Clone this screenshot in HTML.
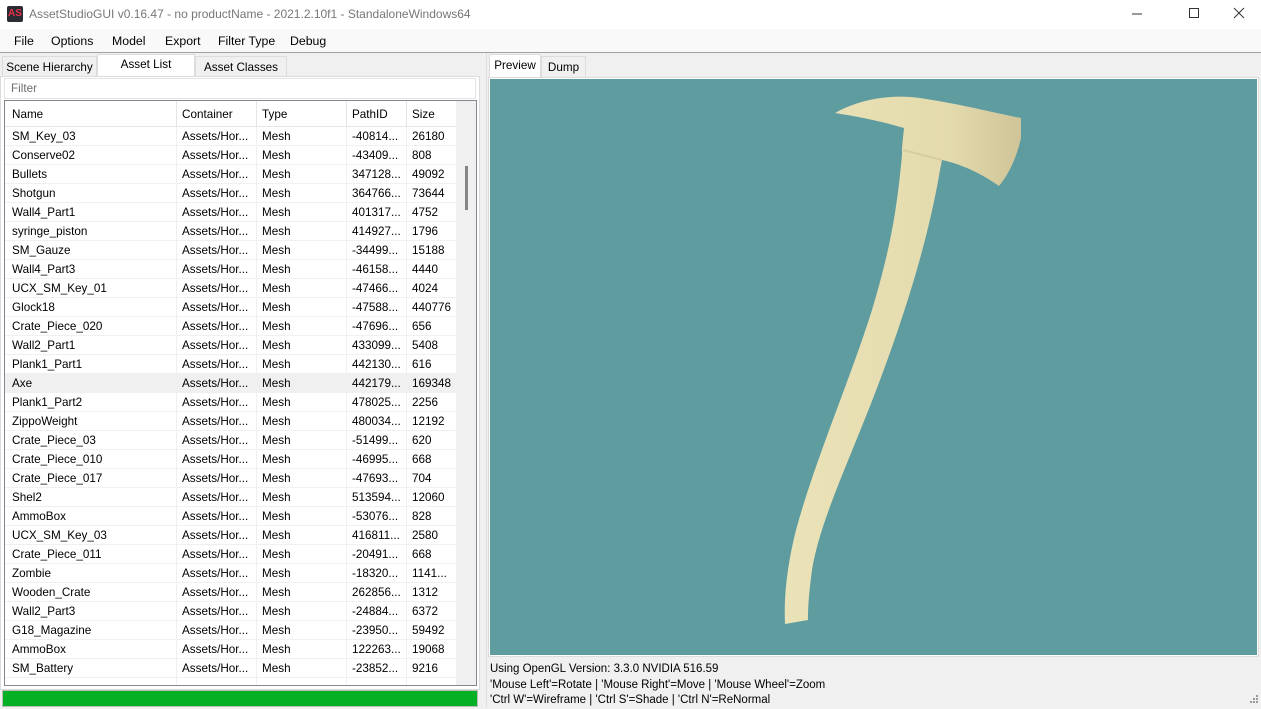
<!DOCTYPE html>
<html><head><meta charset="utf-8"><style>
*{margin:0;padding:0;box-sizing:border-box}
body{width:1261px;height:707px;overflow:hidden;background:#f0f0f0;font-family:"Liberation Sans",sans-serif;font-size:11.7px;color:#000;position:relative}
.a{position:absolute}
#title{left:0;top:0;width:1261px;height:29px;background:#fff}
#menu{left:0;top:29px;width:1261px;height:24px;background:#f9f9f9;border-bottom:1px solid #a0a0a0}
#menu span{position:absolute;top:5px;font-size:12.3px}
.tab{position:absolute;background:#f0f0f0;border:1px solid #dcdcdc;border-bottom:none;font-size:11.7px;text-align:center}
#list{left:4px;top:100px;width:473px;height:586px;border:1px solid #828790;background:#fff;overflow:hidden}
.row{position:absolute;left:0;width:452px;height:19px;border-bottom:1px solid #f0f0f0}
.row span{position:absolute;top:3px;white-space:nowrap}
.c1{left:7px}.c2{left:177px}.c3{left:257px}.c4{left:347px}.c5{left:407px}
.vl{position:absolute;top:0;width:1px;height:586px;background:#f0f0f0}
</style></head><body>
<div class="a" id="title">
 <div class="a" style="left:7px;top:6px;width:16px;height:16px;background:#2b2b33;border-radius:2px;color:#e8304a;font-size:10px;font-weight:bold;line-height:16px;text-align:center">AS</div>
 <div class="a" style="left:29px;top:7px;font-size:12px;color:#777">AssetStudioGUI v0.16.47 - no productName - 2021.2.10f1 - StandaloneWindows64</div>
 <svg class="a" style="left:1130px;top:5px" width="120" height="18"><path d="M2 9h10" stroke="#333"/><rect x="59.5" y="3.5" width="9" height="9" fill="none" stroke="#333"/><path d="M104 3l10 10M114 3l-10 10" stroke="#333"/></svg>
</div>
<div class="a" id="menu">
 <span style="left:14px">File</span><span style="left:51px">Options</span><span style="left:112px">Model</span><span style="left:165px">Export</span><span style="left:218px">Filter Type</span><span style="left:290px">Debug</span>
</div>
<div class="tab" style="left:2px;top:56px;width:95px;height:21px;padding-top:4px">Scene Hierarchy</div>
<div class="tab" style="left:97px;top:54px;width:98px;height:23px;background:#fff;padding-top:3px">Asset List</div>
<div class="tab" style="left:195px;top:56px;width:92px;height:21px;padding-top:4px">Asset Classes</div>
<div class="a" style="left:0;top:76px;width:480px;height:614px;border:1px solid #dcdcdc;background:#fff"></div>
<div class="a" style="left:4px;top:78px;width:472px;height:21px;border:1px solid #e3e3e3;background:#fff;color:#6d6d6d;padding:3px 0 0 6px">Filter</div>
<div class="a" id="list">
 <div class="a" style="left:0;top:0;width:452px;height:26px;background:#fff;border-bottom:1px solid #e5e5e5"></div>
 <div class="vl" style="left:171px"></div><div class="vl" style="left:251px"></div><div class="vl" style="left:341px"></div><div class="vl" style="left:401px"></div><div class="vl" style="left:451px"></div>
 <div class="a" style="left:171px;top:0;width:1px;height:26px;background:#e5e5e5"></div>
 <div class="a" style="left:251px;top:0;width:1px;height:26px;background:#e5e5e5"></div>
 <div class="a" style="left:341px;top:0;width:1px;height:26px;background:#e5e5e5"></div>
 <div class="a" style="left:401px;top:0;width:1px;height:26px;background:#e5e5e5"></div>
 <div class="row" style="top:0;height:26px;border:none"><span class="c1" style="top:7px">Name</span><span class="c2" style="top:7px">Container</span><span class="c3" style="top:7px">Type</span><span class="c4" style="top:7px">PathID</span><span class="c5" style="top:7px">Size</span></div>
 <div class="a" style="left:452px;top:0;width:19px;height:586px;background:#f0f0f0"></div>
 <div class="a" style="left:460px;top:65px;width:3px;height:44px;background:#858585"></div>
 <div id="rows"></div>
</div>
<div class="a" style="left:2px;top:690px;width:476px;height:17px;background:#06b025;border:1px solid #bcbcbc"></div>
<div class="a" style="left:486px;top:53px;width:775px;height:654px;background:#f0f0f0;border-left:1px solid #dcdcdc"></div>
<div class="tab" style="left:489px;top:54px;width:52px;height:24px;background:#fff;padding-top:4px">Preview</div>
<div class="tab" style="left:541px;top:56px;width:45px;height:22px;padding-top:4px">Dump</div>
<div class="a" style="left:488px;top:77px;width:771px;height:580px;border:1px solid #dcdcdc;background:#fff"></div>
<div class="a" style="left:490px;top:79px;width:767px;height:576px;background:#5f9c9f"></div>
<svg class="a" style="left:0;top:0" width="1261" height="707">
 <defs><linearGradient id="g" x1="0" x2="1"><stop offset="0" stop-color="#ebe3b8"/><stop offset="0.7" stop-color="#e3daad"/><stop offset="1" stop-color="#cfc498"/></linearGradient></defs>
 <path fill="url(#g)" d="M835 113 C860 99 890 94 920 98 C960 104 990 112 1021 118 L1021 138 C1016 160 1008 175 999 186 C985 176 965 165 942 160 L940 170 C930 230 910 300 880 380 C850 460 820 520 812 570 C808 600 808 612 808 620 L785 624 C784 600 786 570 796 530 C815 460 850 380 872 310 C890 250 897 210 902 155 L902 148 L904 128 C880 121 860 117 835 113 Z"/>
 <path d="M903 150 L942 160" stroke="#d6cda0" stroke-width="2" fill="none"/>
</svg>
<div class="a" style="left:490px;top:662px;line-height:15.7px;font-size:11.5px">Using OpenGL Version: 3.3.0 NVIDIA 516.59<br>'Mouse Left'=Rotate | 'Mouse Right'=Move | 'Mouse Wheel'=Zoom<br>'Ctrl W'=Wireframe | 'Ctrl S'=Shade | 'Ctrl N'=ReNormal</div>
<svg class="a" style="left:1247px;top:694px" width="12" height="12" fill="#999"><rect x="9" y="1" width="2" height="2"/><rect x="6" y="4" width="2" height="2"/><rect x="9" y="4" width="2" height="2"/><rect x="3" y="7" width="2" height="2"/><rect x="6" y="7" width="2" height="2"/><rect x="9" y="7" width="2" height="2"/></svg>
<script>
var d=[["SM_Key_03","-40814...","26180"],["Conserve02","-43409...","808"],["Bullets","347128...","49092"],["Shotgun","364766...","73644"],["Wall4_Part1","401317...","4752"],["syringe_piston","414927...","1796"],["SM_Gauze","-34499...","15188"],["Wall4_Part3","-46158...","4440"],["UCX_SM_Key_01","-47466...","4024"],["Glock18","-47588...","440776"],["Crate_Piece_020","-47696...","656"],["Wall2_Part1","433099...","5408"],["Plank1_Part1","442130...","616"],["Axe","442179...","169348"],["Plank1_Part2","478025...","2256"],["ZippoWeight","480034...","12192"],["Crate_Piece_03","-51499...","620"],["Crate_Piece_010","-46995...","668"],["Crate_Piece_017","-47693...","704"],["Shel2","513594...","12060"],["AmmoBox","-53076...","828"],["UCX_SM_Key_03","416811...","2580"],["Crate_Piece_011","-20491...","668"],["Zombie","-18320...","1141..."],["Wooden_Crate","262856...","1312"],["Wall2_Part3","-24884...","6372"],["G18_Magazine","-23950...","59492"],["AmmoBox","122263...","19068"],["SM_Battery","-23852...","9216"],["","",""]];
var h="";d.forEach(function(r,i){h+='<div class="row" style="top:'+(26+i*19)+'px;'+(r[0]=="Axe"?'background:#f0f0f0':'')+'"><span class="c1">'+r[0]+'</span><span class="c2">'+(r[0]?'Assets/Hor...':'')+'</span><span class="c3">'+(r[0]?'Mesh':'')+'</span><span class="c4">'+r[1]+'</span><span class="c5">'+r[2]+'</span></div>'});
document.getElementById("rows").innerHTML=h;
</script>
</body></html>
